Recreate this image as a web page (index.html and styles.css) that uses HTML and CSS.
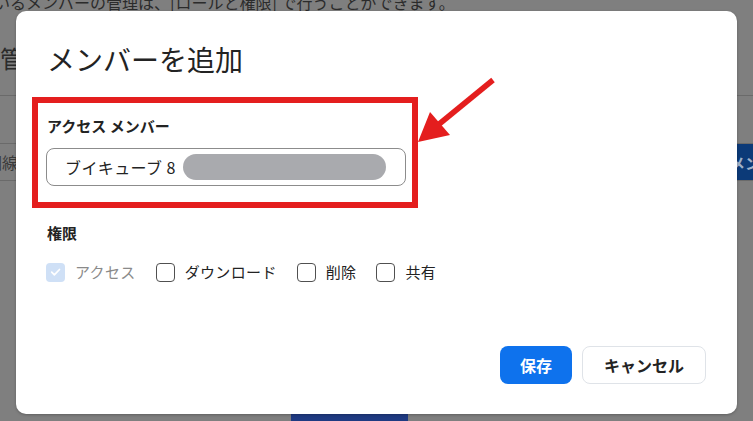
FILE: index.html
```html
<!DOCTYPE html>
<html lang="ja">
<head>
<meta charset="utf-8">
<link rel="stylesheet" href="styles.css">
</head>
<body>
<div class="page">
  <p class="intro">いるメンバーの管理は、[ロールと権限] で行うことができます。</p>
  <h2 class="page-title">管理者</h2>
  <div class="rule rule-a"></div>
  <div class="row-band">
    <span class="row-text">回線</span>
    <span class="page-btn">メンバー</span>
  </div>
  <div class="bottom-strip"><span class="blue-block"></span></div>
</div>

<div class="modal">
  <h1 class="modal-title">メンバーを追加</h1>
  <div class="field">
    <div class="label">アクセス メンバー</div>
    <div class="input">
      <span class="input-text">ブイキューブ 8</span><span class="redact"></span>
    </div>
  </div>
  <div class="field perms">
    <div class="label">権限</div>
    <div class="checks">
      <label class="check disabled"><span class="box checked"><svg viewBox="0 0 20 20" width="20" height="20"><path d="M6 10.2l2.8 2.8 5.4-5.6" fill="none" stroke="#fff" stroke-width="1.8" stroke-linecap="round" stroke-linejoin="round"/></svg></span><span>アクセス</span></label>
      <label class="check"><span class="box"></span><span>ダウンロード</span></label>
      <label class="check"><span class="box"></span><span>削除</span></label>
      <label class="check"><span class="box"></span><span>共有</span></label>
    </div>
  </div>
  <div class="footer">
    <button class="btn primary">保存</button>
    <button class="btn secondary">キャンセル</button>
  </div>
</div>

<div class="highlight"></div>
<svg class="arrow" width="753" height="421" viewBox="0 0 753 421">
  <line x1="493" y1="80" x2="438" y2="125" stroke="#e41e1e" stroke-width="5.5"/>
  <polygon points="418,142 430,112 450,135" fill="#e41e1e"/>
</svg>
</body>
</html>
```
FILE: styles.css
```css
* { box-sizing: border-box; }
html, body {
  margin: 0;
  padding: 0;
}
body {
  width: 753px;
  height: 421px;
  overflow: hidden;
  position: relative;
  background: #7f7f7f;
  font-family: "Noto Sans CJK JP", "Noto Sans", sans-serif;
  color: #232323;
}
.page {
  height: 421px;
  display: flex;
  flex-direction: column;
  overflow: hidden;
}
.intro {
  margin: -9px 0 0 -6px;
  font-size: 16px;
  line-height: 22px;
  color: #2b2b2b;
  white-space: nowrap;
}
.page-title {
  margin: 28px 0 0 0;
  font-size: 24px;
  line-height: 34px;
  font-weight: 400;
  color: #2b2b2b;
}
.rule {
  height: 1px;
  background: #6a6a6a;
}
.rule-a { margin-top: 20px; }
.row-band {
  margin-top: 47px;
  height: 38px;
  border-top: 1px solid #6a6a6a;
  border-bottom: 1px solid #6a6a6a;
  display: flex;
  align-items: center;
  justify-content: space-between;
}
.row-text {
  margin-left: -14px;
  font-size: 16px;
  color: #3a3a3a;
  white-space: nowrap;
}
.page-btn {
  height: 36px;
  width: 17px;
  overflow: hidden;
  background: #0c3a78;
  color: #9fb0c8;
  font-size: 15px;
  font-weight: 700;
  display: flex;
  align-items: center;
  padding-left: 0;
  white-space: nowrap;
  text-indent: -6px;
}
.bottom-strip {
  margin-top: auto;
  height: 8px;
  padding-left: 291px;
}
.blue-block {
  display: block;
  width: 117px;
  height: 8px;
  background: #1f3a82;
}

.modal {
  position: absolute;
  left: 16px;
  top: 11px;
  width: 721px;
  height: 403px;
  background: #fff;
  border-radius: 10px;
  box-shadow: 0 1px 3px rgba(0,0,0,0.25);
  padding: 28px 31px 30px 31px;
  display: flex;
  flex-direction: column;
}
.modal-title {
  margin: 0;
  font-size: 28px;
  line-height: 40px;
  font-weight: 400;
  color: #232323;
}
.field { margin-top: 36px; }
.label {
  font-size: 15px;
  line-height: 22px;
  font-weight: 700;
  color: #232323;
}
.input {
  margin-top: 11px;
  width: 360px;
  height: 38px;
  margin-left: -1px;
  border: 1px solid #8c8c8c;
  border-radius: 8px;
  display: flex;
  align-items: center;
  padding-left: 18px;
}
.input-text {
  font-size: 16px;
  letter-spacing: 0.4px;
  color: #232323;
  white-space: pre;
}
.redact {
  display: inline-block;
  width: 203px;
  height: 26px;
  margin-left: 7px;
  border-radius: 13px;
  background: #a9aaae;
}
.checks {
  margin-top: 18px;
  display: flex;
  align-items: center;
  gap: 20px;
  margin-left: -1px;
}
.check {
  display: flex;
  align-items: center;
  gap: 10px;
  font-size: 15px;
  letter-spacing: 0.35px;
  line-height: 20px;
  color: #232323;
}
.check.disabled { color: #8a8a8a; }
.box {
  width: 19px;
  height: 19px;
  border: 1.5px solid #505050;
  border-radius: 4px;
  background: #fff;
  display: flex;
  align-items: center;
  justify-content: center;
}
.box.checked {
  border: none;
  background: #cfe0f6;
}
.box svg { display: block; }
.footer {
  margin-top: auto;
  display: flex;
  justify-content: flex-end;
  gap: 10px;
}
.btn {
  font-family: inherit;
  font-size: 16px;
  font-weight: 700;
  height: 38px;
  border-radius: 8px;
  cursor: pointer;
}
.btn.primary {
  width: 72px;
  background: #0e72ed;
  border: none;
  color: #fff;
}
.btn.secondary {
  width: 124px;
  background: #fff;
  border: 1px solid #dfe3e8;
  color: #232323;
}

.highlight {
  position: absolute;
  left: 32px;
  top: 97px;
  width: 386px;
  height: 111px;
  border: 6px solid #e41e1e;
}
.arrow {
  position: absolute;
  left: 0;
  top: 0;
}
```
